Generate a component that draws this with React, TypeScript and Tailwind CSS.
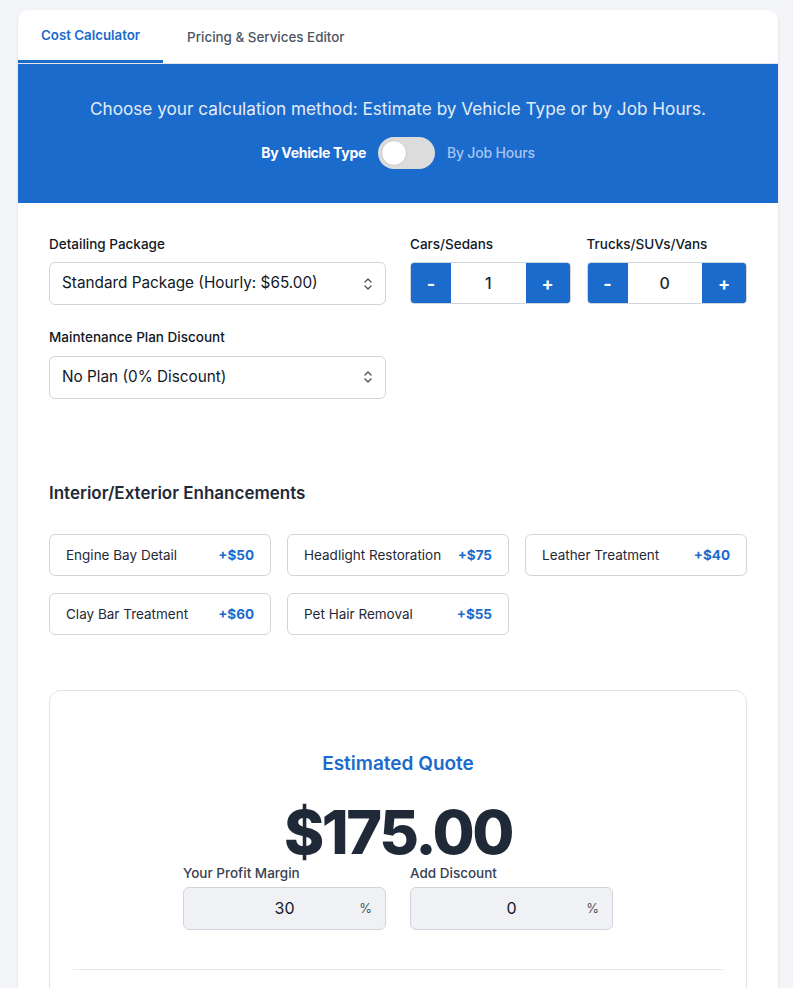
import { useState } from "react";

const enhancements = [
  { name: "Engine Bay Detail", price: "+$50" },
  { name: "Headlight Restoration", price: "+$75" },
  { name: "Leather Treatment", price: "+$40" },
  { name: "Clay Bar Treatment", price: "+$60" },
  { name: "Pet Hair Removal", price: "+$55" },
];

const SelectArrows = () => (
  <svg width="10" height="14" viewBox="0 0 10 14" fill="none" stroke="#4b5563" strokeWidth="1.4" strokeLinecap="round" strokeLinejoin="round">
    <path d="M2 5l3-3 3 3" />
    <path d="M2 9l3 3 3-3" />
  </svg>
);

const FakeSelect = ({ value }: { value: string }) => (
  <div className="flex items-center justify-between h-[43px] px-3 border border-[#d1d5db] rounded-md bg-white">
    <span className="text-[15.3px] text-[#111827]">{value}</span>
    <SelectArrows />
  </div>
);

const Counter = ({ label, value }: { label: string; value: number }) => (
  <div>
    <div className="text-[13.5px] font-medium text-[#111827] mb-[8px]">{label}</div>
    <div className="flex items-stretch h-[42px] border border-[#d1d5db] rounded-[4px] overflow-hidden">
      <button className="w-[40px] bg-[#1a6bcc] text-white text-[18px] font-bold">-</button>
      <div className="flex-1 flex items-center justify-center text-[16px] font-medium text-[#1f2937]">{value}</div>
      <button className="w-[44px] bg-[#1a6bcc] text-white text-[18px] font-bold">+</button>
    </div>
  </div>
);

const PercentInput = ({ label, value }: { label: string; value: string }) => (
  <div className="w-[203px]">
    <div className="text-[13.5px] font-medium text-[#374151] mb-[4px]">{label}</div>
    <div className="relative flex items-center justify-center h-[43px] bg-[#f0f1f4] border border-[#d1d5db] rounded-md">
      <span className="text-[16px] text-[#111827]">{value}</span>
      <span className="absolute right-[13px] text-[13px] text-[#4b5563]">%</span>
    </div>
  </div>
);

export default function App() {
  const [tab, setTab] = useState(0);
  const [byHours, setByHours] = useState(false);

  return (
    <div className="min-h-screen bg-[#f4f5f8] pl-[18px] pr-[15px] pt-[10px] font-['Inter',sans-serif] overflow-hidden">
      <div className="bg-white rounded-[10px] shadow-sm h-[1000px]">
        <div className="flex border-b border-[#e5e7eb] h-[54px]">
          <button
            onClick={() => setTab(0)}
            className={`px-[23px] pt-[2px] text-[13.3px] font-semibold ${tab === 0 ? "text-[#1a6bcc] border-b-[3px] border-[#1a6bcc]" : "text-[#4b5563]"}`}
          >
            Cost Calculator
          </button>
          <button
            onClick={() => setTab(1)}
            className={`px-6 pt-[1px] text-[13.4px] font-medium ${tab === 1 ? "text-[#1a6bcc] border-b-[3px] border-[#1a6bcc]" : "text-[#4b5563]"}`}
          >
            Pricing &amp; Services Editor
          </button>
        </div>

        <div className="bg-[#1a6bcc] h-[139px] flex flex-col items-center pt-[32px]">
          <p className="text-[17.2px] text-[#e3ecf8]">
            Choose your calculation method: Estimate by Vehicle Type or by Job Hours.
          </p>
          <div className="flex items-center gap-3 mt-[15px]">
            <span className="text-[14px] font-bold text-white tracking-[-0.3px]">By Vehicle Type</span>
            <button
              onClick={() => setByHours(!byHours)}
              className={`w-[57px] h-[32px] rounded-full bg-[#dcdcdc] p-[3px] flex ${byHours ? "justify-end" : "justify-start"}`}
            >
              <span className="w-[26px] h-[26px] rounded-full bg-white border border-[#c8c8c8]" />
            </button>
            <span className="text-[14px] font-medium text-[#a9c5ee] tracking-[-0.2px]">By Job Hours</span>
          </div>
        </div>

        <div className="px-[31px] pt-[31px]">
          <div className="grid grid-cols-2 gap-x-6">
            <div>
              <div className="text-[13.5px] font-medium text-[#111827] mb-[8px]">Detailing Package</div>
              <FakeSelect value="Standard Package (Hourly: $65.00)" />
              <div className="text-[13.5px] font-medium text-[#111827] mt-[22px] mb-[8px]">Maintenance Plan Discount</div>
              <FakeSelect value="No Plan (0% Discount)" />
            </div>
            <div className="grid grid-cols-2 gap-4 self-start">
              <Counter label="Cars/Sedans" value={1} />
              <Counter label="Trucks/SUVs/Vans" value={0} />
            </div>
          </div>

          <h2 className="text-[17px] font-semibold text-[#1f2937] mt-[82px]">Interior/Exterior Enhancements</h2>

          <div className="grid grid-cols-3 gap-x-4 gap-y-[17px] mt-[28px]">
            {enhancements.map((e) => (
              <div key={e.name} className="flex items-center justify-between h-[42px] px-4 border border-[#d1d5db] rounded-md">
                <span className="text-[13.5px] text-[#1f2937]">{e.name}</span>
                <span className="text-[13.5px] font-bold text-[#1a6bcc]">{e.price}</span>
              </div>
            ))}
          </div>

          <div className="mt-[55px] border border-[#e0e2e6] rounded-[12px] px-[23px] pt-[59px] h-[320px] flex flex-col items-center">
            <div className="text-[19px] font-semibold text-[#1a6bcc]">Estimated Quote</div>
            <div className="text-[61px] font-extrabold text-[#1f2937] tracking-[-2.4px] leading-[54px] mt-[26px]">$175.00</div>
            <div className="flex gap-6 mt-[4px]">
              <PercentInput label="Your Profit Margin" value="30" />
              <PercentInput label="Add Discount" value="0" />
            </div>
            <div className="w-full border-t border-[#e5e7eb] mt-[39px]" />
          </div>
        </div>
      </div>
    </div>
  );
}
